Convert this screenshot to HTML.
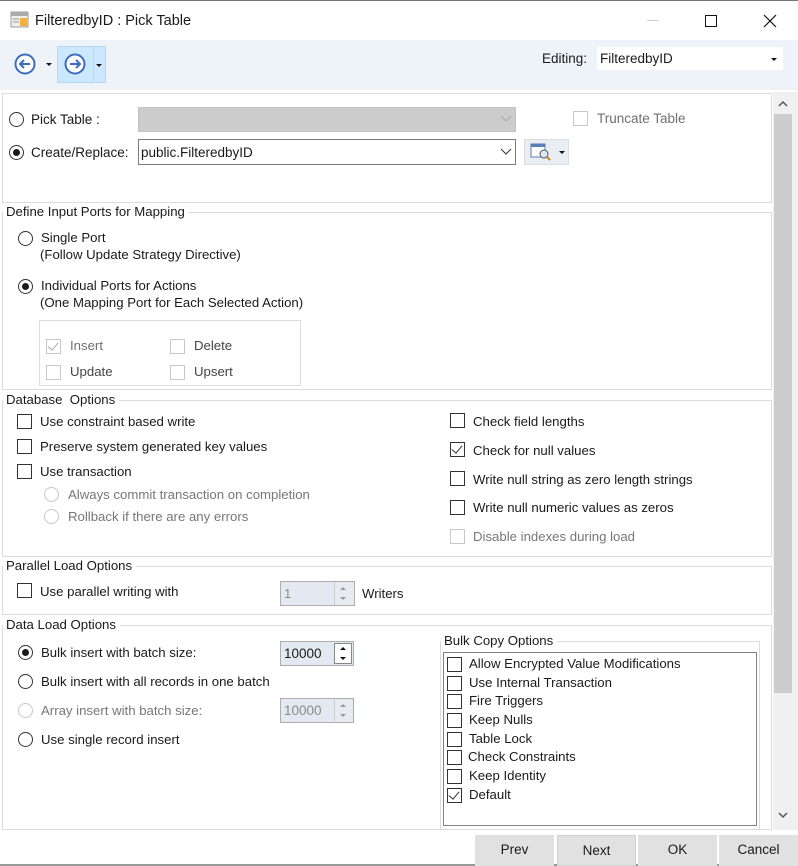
<!DOCTYPE html>
<html><head><meta charset="utf-8"><style>
*{box-sizing:border-box;margin:0;padding:0}
body{width:798px;height:866px;position:relative;background:#fff;font-family:"Liberation Sans",sans-serif;font-size:13.2px;color:#1a1a1a;overflow:hidden}
.a{position:absolute}
.t{position:absolute;white-space:nowrap;line-height:14px}
.g{color:#8a8a8a}
.cb{position:absolute;width:15px;height:15px;border:1px solid #333;background:#fff}
.cb.d{border-color:#c8c8c8}
.rb{position:absolute;width:15px;height:15px;border:1px solid #333;border-radius:50%;background:#fff}
.rb.on::after{content:"";position:absolute;left:3px;top:3px;width:7px;height:7px;border-radius:50%;background:#1a1a1a}
.rb.d{border-color:#c8c8c8}
.box{position:absolute;border:1px solid #dcdcdc}
.lbl{position:absolute;background:#fff;padding:0 4px 0 3px;line-height:14px;white-space:nowrap}
.chk::after{content:"";position:absolute;left:3px;top:0px;width:5px;height:9px;border-right:1.5px solid #333;border-bottom:1.5px solid #333;transform:rotate(40deg)}
.chk.d::after{border-color:#aaa}
.spin{position:absolute;border:1px solid #adadad;background:#e3e9f1}
.btn{position:absolute;top:835px;height:31px;width:79px;background:#e1e1e1;text-align:center;line-height:30px;font-size:13.5px}
</style></head><body>
<div class="a" style="left:0;top:0;width:798px;height:1px;background:#777"></div>
<svg class="a" style="left:10px;top:11px" width="20" height="18"><rect x="1" y="1" width="17" height="15" fill="#eee" stroke="#999"/><rect x="1" y="1" width="17" height="4" fill="#aaa"/><rect x="10" y="7" width="7" height="8" fill="#f0b040"/><line x1="3" y1="8" x2="9" y2="8" stroke="#999"/><line x1="3" y1="11" x2="9" y2="11" stroke="#999"/></svg>
<div class="t" style="left:35px;top:13px;font-size:14.5px;line-height:16px">FilteredbyID : Pick Table</div>
<div class="a" style="left:647px;top:20px;width:11px;height:1px;background:#ccc"></div>
<div class="a" style="left:705px;top:15px;width:12px;height:12px;border:1px solid #111"></div>
<svg class="a" style="left:763px;top:14px" width="14" height="14"><path d="M1 1L13 13M13 1L1 13" stroke="#111" stroke-width="1.2"/></svg>
<div class="a" style="left:0;top:40px;width:798px;height:50px;background:#eef3f9"></div>
<svg class="a" style="left:13px;top:52px" width="24" height="24"><circle cx="12" cy="12" r="9.5" fill="#fff" stroke="#3b6cc0" stroke-width="2"/><path d="M17 12H7M11 8L7 12L11 16" stroke="#3b6cc0" stroke-width="2" fill="none"/></svg>
<div class="a" style="left:46px;top:63px;border:3px solid transparent;border-top:3px solid #111;border-bottom:0"></div>
<div class="a" style="left:57px;top:46px;width:49px;height:37px;background:#cce8ff;border:1px solid #b5d9f5"></div>
<div class="a" style="left:93px;top:47px;width:1px;height:35px;background:#b5d9f5"></div>
<svg class="a" style="left:63px;top:52px" width="24" height="24"><circle cx="12" cy="12" r="9.5" fill="#fff" stroke="#3b6cc0" stroke-width="2"/><path d="M7 12H17M13 8L17 12L13 16" stroke="#3b6cc0" stroke-width="2" fill="none"/></svg>
<div class="a" style="left:96px;top:64px;border:3px solid transparent;border-top:3px solid #111;border-bottom:0"></div>
<div class="t" style="left:542px;top:52px;font-size:13.5px">Editing:</div>
<div class="a" style="left:597px;top:47px;width:186px;height:23px;background:#fff"></div>
<div class="t" style="left:600px;top:52px;font-size:13.5px">FilteredbyID</div>
<div class="a" style="left:771px;top:58px;border:3px solid transparent;border-top:3px solid #111;border-bottom:0"></div>
<div class="a" style="left:773px;top:92px;width:25px;height:738px;background:#f0f0f0"></div>
<div class="a" style="left:774px;top:114px;width:18px;height:579px;background:#cdcdcd"></div>
<svg class="a" style="left:778px;top:100px" width="10" height="8"><path d="M1 6L5 2L9 6" stroke="#555" stroke-width="1.5" fill="none"/></svg>
<svg class="a" style="left:778px;top:811px" width="10" height="8"><path d="M1 2L5 6L9 2" stroke="#555" stroke-width="1.5" fill="none"/></svg>
<div class="box" style="left:2px;top:93px;width:770px;height:110px"></div>
<div class="rb" style="left:9px;top:112px"></div><div class="t" style="left:31px;top:113px;font-size:13.5px">Pick Table :</div>
<div class="a" style="left:138px;top:107px;width:378px;height:25px;background:#ccc;border:1px solid #c4c4c4"></div>
<svg class="a" style="left:500px;top:115px" width="12" height="8"><path d="M1 1L6 6L11 1" stroke="#aaa" fill="none"/></svg>
<div class="cb d" style="left:573px;top:111px"></div><div class="t g" style="left:597px;top:112px;font-size:13.5px;color:#707070">Truncate Table</div>
<div class="rb on" style="left:9px;top:145px"></div><div class="t" style="left:31px;top:146px;font-size:13.5px">Create/Replace:</div>
<div class="a" style="left:138px;top:139px;width:378px;height:26px;border:1px solid #7a7a7a"></div>
<div class="t" style="left:141px;top:146px;font-size:13.5px">public.FilteredbyID</div>
<svg class="a" style="left:500px;top:148px" width="12" height="8"><path d="M1 1L6 6L11 1" stroke="#333" fill="none"/></svg>
<div class="a" style="left:524px;top:139px;width:45px;height:26px;background:#eaeef3;border:1px solid #d8dde3"></div>
<svg class="a" style="left:530px;top:143px" width="22" height="18"><rect x="1" y="1" width="14" height="13" fill="#fff" stroke="#5a7fb5"/><rect x="1" y="1" width="14" height="3" fill="#5a7fb5"/><circle cx="14" cy="11" r="4" fill="#dde8f5" stroke="#555"/><line x1="17" y1="14" x2="20" y2="17" stroke="#d08a20" stroke-width="2"/></svg>
<div class="a" style="left:559px;top:151px;border:3px solid transparent;border-top:3px solid #111;border-bottom:0"></div>
<div class="box" style="left:2px;top:212px;width:770px;height:178px"></div>
<div class="lbl" style="left:3px;top:205px">Define Input Ports for Mapping</div>
<div class="rb" style="left:18px;top:231px"></div><div class="t" style="left:41px;top:231px">Single Port</div>
<div class="t" style="left:40px;top:248px">(Follow Update Strategy Directive)</div>
<div class="rb on" style="left:18px;top:279px"></div><div class="t" style="left:41px;top:279px">Individual Ports for Actions</div>
<div class="t" style="left:40px;top:296px">(One Mapping Port for Each Selected Action)</div>
<div class="box" style="left:39px;top:320px;width:262px;height:66px"></div>
<div class="cb d chk" style="left:46px;top:339px"></div><div class="t g" style="left:70px;top:339px;color:#707070">Insert</div>
<div class="cb d" style="left:170px;top:339px"></div><div class="t" style="left:194px;top:339px;color:#444">Delete</div>
<div class="cb d" style="left:46px;top:365px"></div><div class="t" style="left:70px;top:365px;color:#444">Update</div>
<div class="cb d" style="left:170px;top:365px"></div><div class="t" style="left:194px;top:365px;color:#444">Upsert</div>
<div class="box" style="left:2px;top:400px;width:770px;height:157px"></div>
<div class="lbl" style="left:3px;top:393px">Database&nbsp; Options</div>
<div class="cb" style="left:17px;top:414px"></div><div class="t" style="left:40px;top:415px">Use constraint based write</div>
<div class="cb" style="left:17px;top:439px"></div><div class="t" style="left:40px;top:440px">Preserve system generated key values</div>
<div class="cb" style="left:17px;top:464px"></div><div class="t" style="left:40px;top:465px">Use transaction</div>
<div class="rb d" style="left:44px;top:487px"></div><div class="t g" style="left:68px;top:488px;color:#777">Always commit transaction on completion</div>
<div class="rb d" style="left:44px;top:509px"></div><div class="t g" style="left:68px;top:510px;color:#777">Rollback if there are any errors</div>
<div class="cb" style="left:450px;top:413px"></div><div class="t" style="left:473px;top:415px">Check field lengths</div>
<div class="cb chk" style="left:450px;top:442px"></div><div class="t" style="left:473px;top:444px">Check for null values</div>
<div class="cb" style="left:450px;top:471px"></div><div class="t" style="left:473px;top:473px">Write null string as zero length strings</div>
<div class="cb" style="left:450px;top:500px"></div><div class="t" style="left:473px;top:501px">Write null numeric values as zeros</div>
<div class="cb d" style="left:450px;top:529px"></div><div class="t g" style="left:473px;top:530px;color:#777">Disable indexes during load</div>
<div class="box" style="left:2px;top:566px;width:770px;height:49px"></div>
<div class="lbl" style="left:3px;top:559px">Parallel Load Options</div>
<div class="cb" style="left:17px;top:583px"></div><div class="t" style="left:40px;top:585px">Use parallel writing with</div>
<div class="spin" style="left:280px;top:581px;width:75px;height:25px"></div>
<div class="t g" style="left:284px;top:587px">1</div>
<div class="a" style="left:334px;top:582px;width:20px;height:23px;background:#e8ecf1;border-left:1px solid #ccc"></div>
<div class="a" style="left:340px;top:587px;border:3px solid transparent;border-bottom:3px solid #999;border-top:0"></div>
<div class="a" style="left:340px;top:597px;border:3px solid transparent;border-top:3px solid #999;border-bottom:0"></div>
<div class="t" style="left:362px;top:587px">Writers</div>
<div class="box" style="left:2px;top:625px;width:770px;height:205px"></div>
<div class="lbl" style="left:3px;top:618px">Data Load Options</div>
<div class="rb on" style="left:18px;top:645px"></div><div class="t" style="left:41px;top:646px">Bulk insert with batch size:</div>
<div class="spin" style="left:280px;top:641px;width:74px;height:25px"></div>
<div class="t" style="left:284px;top:647px;font-size:13.5px">10000</div>
<div class="a" style="left:334px;top:643px;width:18px;height:21px;background:#fff;border:1px solid #888"></div>
<div class="a" style="left:340px;top:647px;border:3px solid transparent;border-bottom:3px solid #111;border-top:0"></div>
<div class="a" style="left:340px;top:657px;border:3px solid transparent;border-top:3px solid #111;border-bottom:0"></div>
<div class="rb" style="left:18px;top:674px"></div><div class="t" style="left:41px;top:675px">Bulk insert with all records in one batch</div>
<div class="rb d" style="left:18px;top:703px"></div><div class="t g" style="left:41px;top:704px;color:#777">Array insert with batch size:</div>
<div class="spin" style="left:280px;top:698px;width:74px;height:25px"></div>
<div class="t g" style="left:284px;top:704px;font-size:13.5px">10000</div>
<div class="a" style="left:334px;top:700px;width:18px;height:21px;background:#e8ecf1;border-left:1px solid #ccc"></div>
<div class="a" style="left:340px;top:704px;border:3px solid transparent;border-bottom:3px solid #999;border-top:0"></div>
<div class="a" style="left:340px;top:714px;border:3px solid transparent;border-top:3px solid #999;border-bottom:0"></div>
<div class="rb" style="left:18px;top:732px"></div><div class="t" style="left:41px;top:733px">Use single record insert</div>
<div class="box" style="left:440px;top:641px;width:320px;height:189px"></div>
<div class="lbl" style="left:441px;top:634px">Bulk Copy Options</div>
<div class="a" style="left:443px;top:652px;width:314px;height:174px;border:1px solid #828282;background:#fff"></div>
<div class="cb" style="left:447px;top:657px"></div><div class="t" style="left:469px;top:657px">Allow Encrypted Value Modifications</div>
<div class="cb" style="left:447px;top:676px"></div><div class="t" style="left:469px;top:676px">Use Internal Transaction</div>
<div class="cb" style="left:447px;top:694px"></div><div class="t" style="left:469px;top:694px">Fire Triggers</div>
<div class="cb" style="left:447px;top:713px"></div><div class="t" style="left:469px;top:713px">Keep Nulls</div>
<div class="cb" style="left:447px;top:732px"></div><div class="t" style="left:469px;top:732px">Table Lock</div>
<div class="cb" style="left:447px;top:750px"></div><div class="t" style="left:468px;top:750px">Check Constraints</div>
<div class="cb" style="left:447px;top:769px"></div><div class="t" style="left:469px;top:769px">Keep Identity</div>
<div class="cb chk" style="left:447px;top:788px"></div><div class="t" style="left:469px;top:788px">Default</div>
<div class="a" style="left:0;top:864px;width:798px;height:2px;background:#999"></div>
<div class="btn" style="left:475px">Prev</div>
<div class="btn" style="left:557px;border:1px solid #d0d0d0">Next</div>
<div class="btn" style="left:638px">OK</div>
<div class="btn" style="left:719px">Cancel</div>
</body></html>
